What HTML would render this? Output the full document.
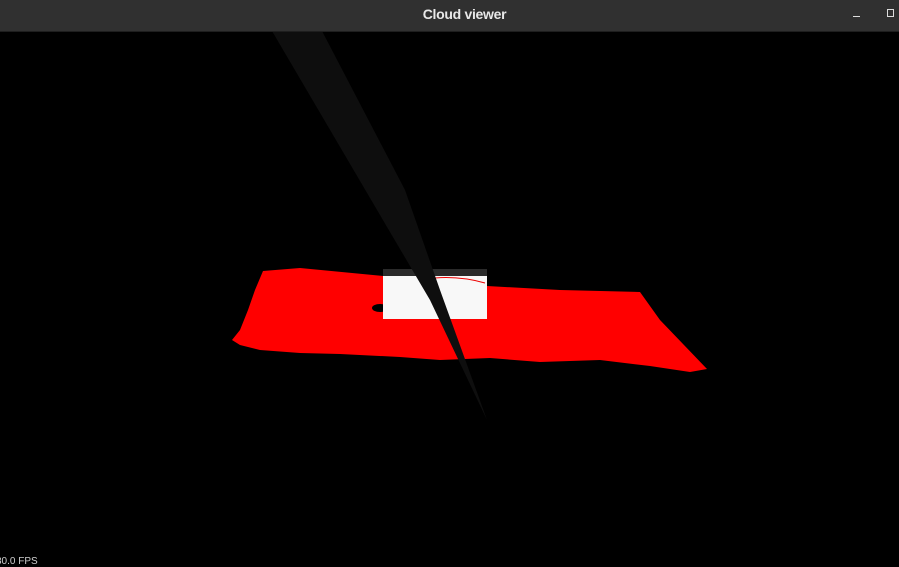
<!DOCTYPE html>
<html><head><style>
html,body{margin:0;padding:0;width:899px;height:563px;overflow:hidden;background:#000;font-family:"Liberation Sans",sans-serif}
.bar{position:absolute;left:0;top:0;width:899px;height:31px;background:#303030;border-bottom:1px solid #1e1e1e}
.t{position:absolute;left:0;width:899px;top:6px;text-align:center;color:#e8e8e8;font-weight:bold;font-size:14px;letter-spacing:-0.3px;padding-left:30px;box-sizing:border-box}
.fps{position:absolute;left:-4px;top:556px;color:#ccc;font-size:10px}
</style></head><body>
<svg width="899" height="563" style="position:absolute;left:0;top:0">
<path d="M263,271 L300,268 L383,276 L383,316 L487,318 L487,286 L560,290 L640,292 L660,320 L707,369 L690,372 L650,366 L600,360 L540,362 L490,358 L440,360 L400,357 L340,354 L300,353 L260,350 L240,345 L232,340 L240,330 L248,310 L255,290 Z" fill="#ff0000"/>
<ellipse cx="380" cy="308" rx="8" ry="4" fill="#000"/>
<rect x="383" y="275" width="104" height="44" fill="#f8f8f8"/>
<rect x="383" y="269" width="104" height="7" fill="#2a2a2a"/>
<path d="M435,278 Q460,276 485,283" stroke="#e00" stroke-width="1" fill="none"/>
<path d="M272,31 L322,31 L405,190 L440,290 L487,420 L430,300 L380,215 Z" fill="#0e0e0e"/>
</svg>
<div class="bar"><div class="t">Cloud viewer</div>
<div style="position:absolute;left:853px;top:16px;width:7px;height:1px;background:#ddd"></div>
<div style="position:absolute;left:887px;top:9px;width:5px;height:6px;border:1px solid #ddd"></div>
</div>
<div class="fps">30.0 FPS</div>
</body></html>
